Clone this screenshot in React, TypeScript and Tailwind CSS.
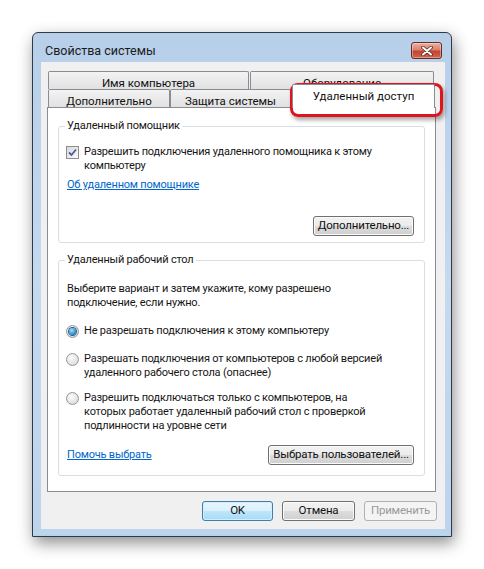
import React from 'react';

/**
 * Свойства системы / Удаленный доступ (Windows 7 dialog)
 */

const FONT = { fontFamily: 'Roboto, "Noto Sans", sans-serif' };

function Win7Button({
  children,
  width,
  variant = 'normal',
}: {
  children: React.ReactNode;
  width: string;
  variant?: 'normal' | 'default' | 'disabled';
}) {
  const base =
    'flex h-[20px] items-center justify-center whitespace-nowrap rounded-[3px] border text-[11.5px] leading-none tracking-[-0.2px]';
  const look =
    variant === 'default'
      ? 'border-[#3c7fb1] bg-[linear-gradient(#eaf6fd_0%,#d9f0fc_50%,#bee6fd_50%,#a7d9f5_100%)] text-[#111] shadow-[inset_0_0_0_1px_#d6ecf9]'
      : variant === 'disabled'
        ? 'border-[#adb2b5] bg-[#f4f4f4] text-[#9a9a9a]'
        : 'border-[#707070] bg-[linear-gradient(#f2f2f2_0%,#ebebeb_50%,#dddddd_50%,#cfcfcf_100%)] text-[#111] shadow-[inset_0_0_0_1px_#fbfbfb]';
  return <div className={`${base} ${look} ${width}`}>{children}</div>;
}

function CheckBox() {
  return (
    <span className="mt-[1px] flex h-[13px] w-[13px] shrink-0 items-center justify-center border border-[#8e8f8f] bg-linear-to-br from-[#d8d8d8] to-[#fbfbfb]">
      <svg width="9" height="9" viewBox="0 0 9 9">
        <path d="M1 4.5 L3.5 7 L8 1.5" fill="none" stroke="#4a5d9e" strokeWidth="1.8" />
      </svg>
    </span>
  );
}

function Radio({ checked = false }: { checked?: boolean }) {
  return (
    <span className="mt-[1px] flex h-[13px] w-[13px] shrink-0 items-center justify-center rounded-full border border-[#979797] bg-[radial-gradient(circle_at_40%_35%,#fbfbfb_0%,#e4e4e4_60%,#cfcfcf_100%)]">
      {checked && (
        <span className="h-[7px] w-[7px] rounded-full bg-[radial-gradient(circle_at_40%_35%,#a8e1fb_0%,#3b98d0_55%,#145a8a_100%)] shadow-[0_0_0_1px_#1b5f8e]" />
      )}
    </span>
  );
}

function Tab({ children, width }: { children: React.ReactNode; width: string }) {
  return (
    <div
      className={`flex h-[18px] items-start justify-center rounded-t-[2px] border border-b-0 border-[#898c95] bg-linear-to-b from-[#f3f3f3] to-[#e1e1e1] pt-[4px] text-[11.5px] leading-[14px] text-[#111] ${width}`}
    >
      {children}
    </div>
  );
}

export default function App() {
  return (
    <div className="relative h-[569px] w-[484px] overflow-hidden bg-white pl-[32px] pt-[32px]" style={FONT}>
      {/* window */}
      <div className="flex h-[505px] w-[420px] flex-col rounded-t-[6px] border border-[#2f3a48] bg-linear-to-b from-[#b7cfe9] via-[#c5d9ef] to-[#bcd4ec] shadow-[2px_6px_16px_rgba(0,0,0,0.45)]">
        {/* title bar */}
        <div className="flex h-[29px] items-start pl-[12px] pr-[9px] pt-[9px]">
          <span className="flex-1 text-[12.5px] leading-[18px] text-[#1b1b1b]">Свойства системы</span>
          <div className="flex h-[17px] w-[31px] items-center justify-center rounded-[3px] border border-[#6b2b24] bg-[linear-gradient(#eab1a4_0%,#d9826f_45%,#c4442f_55%,#d0654c_100%)] shadow-[inset_0_0_0_1px_rgba(255,255,255,0.35)]">
            <svg width="12" height="10" viewBox="0 0 12 10">
              <path d="M2 1.5 L10 8.5 M10 1.5 L2 8.5" stroke="#5a2a24" strokeWidth="3.6" strokeLinecap="round" />
              <path d="M2 1.5 L10 8.5 M10 1.5 L2 8.5" stroke="#ffffff" strokeWidth="2" strokeLinecap="round" />
            </svg>
          </div>
        </div>

        {/* client area */}
        <div className="ml-[8px] mr-[6px] flex h-[467px] flex-col bg-[#f0f0f0] pl-[6px] pt-[9px]">
          {/* tabs */}
          <div className="flex w-[389px] flex-col">
            <div className="flex pl-[1px]">
              <Tab width="w-[201px]">Имя компьютера</Tab>
              <Tab width="w-[184px] ml-[1px]">Оборудование</Tab>
            </div>
            <div className="flex h-[18px] items-end pl-[1px]">
              <Tab width="w-[122px]">Дополнительно</Tab>
              <Tab width="w-[121px]">Защита системы</Tab>
              <div className="relative z-10 mb-[-1px] ml-[1px] flex h-[24px] w-[143px] items-start justify-center rounded-t-[2px] border border-b-0 border-[#898c95] bg-white pt-[4px] text-[11.5px] leading-[14px] text-[#111]">
                Удаленный доступ
              </div>
            </div>

            {/* panel */}
            <div className="h-[385px] border border-[#898c95] bg-white px-[10px] pt-[11px] text-[11px] leading-[14px] tracking-[-0.2px] text-[#161616]">
              <fieldset className="rounded-[3px] border border-[#d5dfe5] pl-[6px] pr-[10px] pb-[6px]">
                <legend className="px-[2px] leading-[14px]">Удаленный помощник</legend>
                <div className="pl-[1px] pt-[12px]">
                  <div className="flex items-start gap-[5px]">
                    <CheckBox />
                    <span>
                      Разрешить подключения удаленного помощника к этому
                      <br />
                      компьютеру
                    </span>
                  </div>
                  <div className="mt-[5px] pl-[1px]">
                    <span className="text-[#0066cc] underline">Об удаленном помощнике</span>
                  </div>
                  <div className="mt-[24px] flex justify-end">
                    <Win7Button width="w-[101px] h-[19px]">Дополнительно...</Win7Button>
                  </div>
                </div>
              </fieldset>

              <fieldset className="mt-[10px] rounded-[3px] border border-[#d5dfe5] pl-[6px] pr-[10px] pb-[10px]">
                <legend className="px-[2px] leading-[14px]">Удаленный рабочий стол</legend>
                <div className="pl-[1px] pt-[15px]">
                  <p className="pl-[1px]">
                    Выберите вариант и затем укажите, кому разрешено
                    <br />
                    подключение, если нужно.
                  </p>
                  <div className="mt-[14px] flex items-start gap-[5px]">
                    <Radio checked />
                    <span>Не разрешать подключения к этому компьютеру</span>
                  </div>
                  <div className="mt-[14px] flex items-start gap-[5px]">
                    <Radio />
                    <span>
                      Разрешать подключения от компьютеров с любой версией
                      <br />
                      удаленного рабочего стола (опаснее)
                    </span>
                  </div>
                  <div className="mt-[11px] flex items-start gap-[5px]">
                    <Radio />
                    <span>
                      Разрешить подключаться только с компьютеров, на
                      <br />
                      которых работает удаленный рабочий стол с проверкой
                      <br />
                      подлинности на уровне сети
                    </span>
                  </div>
                  <div className="mt-[12px] flex items-center justify-between pl-[1px]">
                    <span className="text-[#0066cc] underline">Помочь выбрать</span>
                    <Win7Button width="w-[146px] h-[19px]">Выбрать пользователей...</Win7Button>
                  </div>
                </div>
              </fieldset>
            </div>
          </div>

          {/* dialog buttons */}
          <div className="mt-[9px] flex justify-end gap-[9px] pr-[8px]">
            <Win7Button width="w-[71px]" variant="default">
              OK
            </Win7Button>
            <Win7Button width="w-[73px]">Отмена</Win7Button>
            <Win7Button width="w-[73px]" variant="disabled">
              Применить
            </Win7Button>
          </div>
        </div>
        <div className="mt-auto h-[1px] bg-[#a9d8f2]" />
      </div>

      {/* red annotation around the selected tab */}
      <div className="absolute left-[290px] top-[83px] h-[34px] w-[153px] rounded-[8px] border-[3px] border-[#e0141e] shadow-[2px_3px_4px_rgba(0,0,0,0.35)]" />
    </div>
  );
}
